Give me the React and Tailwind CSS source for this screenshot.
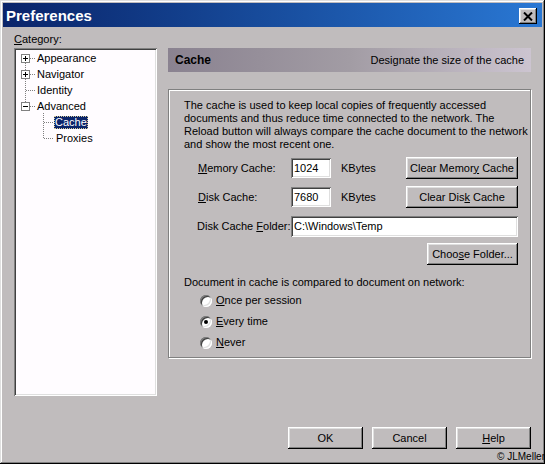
import React from "react";

const RAISED =
  "shadow-[inset_-1px_-1px_0_#000,inset_1px_1px_0_#fff,inset_-2px_-2px_0_#808080,inset_2px_2px_0_#dfdfdf]";
const SUNKEN =
  "shadow-[inset_1px_1px_0_#808080,inset_-1px_-1px_0_#fff,inset_2px_2px_0_#404040,inset_-2px_-2px_0_#dfdfdf]";

function Btn({ children, className = "" }) {
  return (
    <div
      className={`flex items-center justify-center h-[22px] bg-[#c0bcbd] text-[11px] text-black ${RAISED} ${className}`}
    >
      {children}
    </div>
  );
}

function Field({ value, className = "" }) {
  return (
    <div
      className={`bg-white flex items-center pl-[3px] text-[11px] text-black ${SUNKEN} ${className}`}
    >
      {value}
    </div>
  );
}

function Radio({ checked, children }) {
  return (
    <div className="flex items-center h-[21px] pl-[16px] gap-[4px]">
      <div className="w-[12px] h-[12px] rounded-full bg-white flex items-center justify-center shadow-[inset_1px_1px_0_#808080,inset_-1px_-1px_0_#fff,inset_2px_2px_0_#404040,inset_-2px_-2px_0_#dfdfdf]">
        {checked && <div className="w-[4px] h-[4px] rounded-full bg-black" />}
      </div>
      <span className="text-[11px] leading-[13px]">{children}</span>
    </div>
  );
}

function TreeLines() {
  const box = (y, minus) => (
    <g key={y}>
      <rect x="5.5" y={y - 3.5} width="8" height="8" fill="#fff" stroke="#808080" />
      <path d={`M7 ${y + 0.5}h5`} stroke="#000" />
      {!minus && <path d={`M9.5 ${y - 2}v5`} stroke="#000" />}
    </g>
  );
  return (
    <svg
      className="absolute left-[2px] top-[2px]"
      width="60"
      height="100"
      viewBox="0 0 60 100"
    >
      <g stroke="#808080" strokeDasharray="1 1" fill="none">
        <path d="M9.5 13V52" />
        <path d="M14 8.5h5" />
        <path d="M14 24.5h5" />
        <path d="M10 40.5h9" />
        <path d="M14 56.5h5" />
        <path d="M27.5 63V88" />
        <path d="M28 72.5h10" />
        <path d="M28 88.5h10" />
      </g>
      {box(8, false)}
      {box(24, false)}
      {box(56, true)}
    </svg>
  );
}

function Tree() {
  const Row = ({ children, child, selected }) => (
    <div className={`flex items-center h-[16px] ${child ? "pl-[38px]" : "pl-[21px]"}`}>
      {selected ? (
        <span className="bg-[#0a246a] text-white px-[1px] leading-[13px] outline-1 outline-dotted outline-[#d8cc98] -outline-offset-1">
          {children}
        </span>
      ) : (
        <span className={`leading-[13px] ${child ? "pl-[2px]" : ""}`}>{children}</span>
      )}
    </div>
  );
  return (
    <div className={`relative w-[143px] h-[348px] bg-[#fffcff] p-[2px] text-[11px] text-black ${SUNKEN}`}>
      <TreeLines />
      <div className="relative flex flex-col">
        <Row>Appearance</Row>
        <Row>Navigator</Row>
        <Row>Identity</Row>
        <Row>Advanced</Row>
        <Row child selected>Cache</Row>
        <Row child>Proxies</Row>
      </div>
    </div>
  );
}

export default function App() {
  return (
    <div
      className={`relative w-[545px] h-[464px] overflow-hidden bg-[#c0bcbd] p-[3px] flex flex-col font-['Liberation_Sans',Arial,sans-serif] text-black shadow-[inset_-1px_-1px_0_#000,inset_1px_1px_0_#dfdfdf,inset_-2px_-2px_0_#808080,inset_2px_2px_0_#fff]`}
    >
      {/* Title bar */}
      <div className="h-[24px] flex items-center justify-between bg-linear-to-r from-[#0a246a] to-[#2a78d4] pl-[3px]">
        <span className="text-white font-bold text-[15px] leading-none">
          Preferences
        </span>
        <div className={`w-[18px] h-[16px] mr-[5px] mt-[2px] bg-[#c0bcbd] flex items-center justify-center ${RAISED}`}>
          <svg width="10" height="9" viewBox="0 0 10 9">
            <path d="M1 0.5L9 8.5M9 0.5L1 8.5" stroke="#000" strokeWidth="2" />
          </svg>
        </div>
      </div>

      {/* Body */}
      <div className="flex flex-col px-[11px] pt-[6px]">
        <div className="h-[13px] text-[11px] leading-[13px] mb-[2px]">
          <u>C</u>ategory:
        </div>
        <div className="flex gap-[11px]">
          <Tree />
          <div className="w-[363px] flex flex-col">
            <div className="h-[24px] flex items-center justify-between px-[7px] bg-linear-to-r from-[#8a8290] via-[#a29ca4] to-[#ccc4d0]">
              <span className="font-bold text-[12px]">Cache</span>
              <span className="text-[11px]">Designate the size of the cache</span>
            </div>
            <div className="mt-[17px] border border-[#808080] shadow-[1px_1px_0_#fff,inset_1px_1px_0_#fff] pt-[9px] pl-[15px] pr-[12px] pb-[4px] text-[11px]">
              <p className="leading-[13px] whitespace-nowrap">
                The cache is used to keep local copies of frequently accessed
                <br />
                documents and thus reduce time connected to the network. The
                <br />
                Reload button will always compare the cache document to the network
                <br />
                and show the most recent one.
              </p>
              <div className="mt-[6px] flex items-center h-[22px]">
                <div className="w-[107px] pl-[14px]">
                  <u>M</u>emory Cache:
                </div>
                <Field value="1024" className="w-[40px] h-[20px]" />
                <span className="ml-[10px]">KBytes</span>
                <Btn className="ml-auto w-[112px]">
                  Clear Memor<u>y</u>&nbsp;Cache
                </Btn>
              </div>
              <div className="mt-[7px] flex items-center h-[22px]">
                <div className="w-[107px] pl-[14px]">
                  <u>D</u>isk Cache:
                </div>
                <Field value="7680" className="w-[40px] h-[20px]" />
                <span className="ml-[10px]">KBytes</span>
                <Btn className="ml-auto w-[112px]">
                  Clear Dis<u>k</u>&nbsp;Cache
                </Btn>
              </div>
              <div className="mt-[7px] flex items-center h-[22px]">
                <div className="w-[107px] pl-[13px] whitespace-nowrap">
                  Disk Cache <u>F</u>older:
                </div>
                <Field value="C:\Windows\Temp" className="flex-1 h-[21px]" />
              </div>
              <div className="mt-[6px] flex justify-end">
                <Btn className="w-[91px]">
                  Choo<u>s</u>e Folder...
                </Btn>
              </div>
              <div className="mt-[11px] leading-[13px]">
                Document in cache is compared to document on network:
              </div>
              <div className="mt-[1px] flex flex-col">
                <Radio>
                  <u>O</u>nce per session
                </Radio>
                <Radio checked>
                  <u>E</u>very time
                </Radio>
                <Radio>
                  <u>N</u>ever
                </Radio>
              </div>
            </div>
          </div>
        </div>
        <div className="mt-[31px] flex justify-end gap-[9px]">
          <Btn className="w-[75px]">OK</Btn>
          <Btn className="w-[75px]">Cancel</Btn>
          <Btn className="w-[75px]">
            <u>H</u>elp
          </Btn>
        </div>
      </div>

      <span className="absolute right-0 bottom-[1px] text-[10px] leading-[12px] text-black">
        © JLMeller
      </span>
    </div>
  );
}
